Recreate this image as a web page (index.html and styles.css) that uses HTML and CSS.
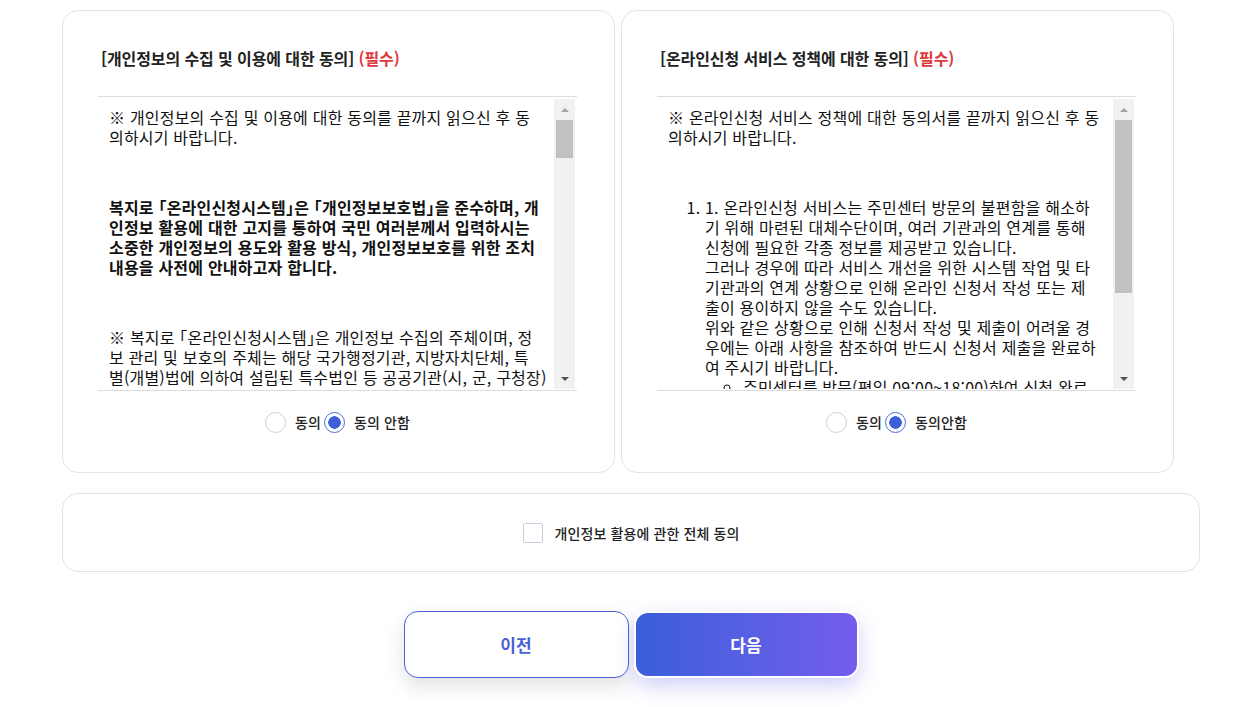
FILE: index.html
```html
<!DOCTYPE html>
<html lang="ko">
<head>
<meta charset="utf-8">
<title>동의</title>
<link rel="stylesheet" href="styles.css">
</head>
<body>
<div class="page">
  <div class="cards">
    <section class="card">
      <h2 class="card-title">[개인정보의 수집 및 이용에 대한 동의] <span class="req">(필수)</span></h2>
      <div class="terms">
        <div class="terms-body">
          <p class="para"><span class="ln">※ 개인정보의 수집 및 이용에 대한 동의를 끝까지 읽으신 후 동</span><span class="ln">의하시기 바랍니다.</span></p>
          <p class="para strong"><span class="ln">복지로 「온라인신청시스템」은 「개인정보보호법」을 준수하며, 개</span><span class="ln">인정보 활용에 대한 고지를 통하여 국민 여러분께서 입력하시는</span><span class="ln">소중한 개인정보의 용도와 활용 방식, 개인정보보호를 위한 조치</span><span class="ln">내용을 사전에 안내하고자 합니다.</span></p>
          <p class="para"><span class="ln">※ 복지로 「온라인신청시스템」은 개인정보 수집의 주체이며, 정</span><span class="ln">보 관리 및 보호의 주체는 해당 국가행정기관, 지방자치단체, 특</span><span class="ln">별(개별)법에 의하여 설립된 특수법인 등 공공기관(시, 군, 구청장)</span></p>
        </div>
        <div class="scrollbar">
          <span class="sb-btn"><span class="tri-up"></span></span>
          <span class="sb-thumb thumb-short"></span>
          <span class="sb-space"></span>
          <span class="sb-btn"><span class="tri-down"></span></span>
        </div>
      </div>
      <div class="choices">
        <label class="choice"><input type="radio" name="a1" class="radio"><span class="choice-text">동의</span></label>
        <label class="choice"><input type="radio" name="a1" class="radio" checked><span class="choice-text">동의 안함</span></label>
      </div>
    </section>

    <section class="card">
      <h2 class="card-title">[온라인신청 서비스 정책에 대한 동의] <span class="req">(필수)</span></h2>
      <div class="terms">
        <div class="terms-body">
          <p class="para"><span class="ln">※ 온라인신청 서비스 정책에 대한 동의서를 끝까지 읽으신 후 동</span><span class="ln">의하시기 바랍니다.</span></p>
          <ol class="num-list">
            <li><span class="ln">1. 온라인신청 서비스는 주민센터 방문의 불편함을 해소하</span><span class="ln">기 위해 마련된 대체수단이며, 여러 기관과의 연계를 통해</span><span class="ln">신청에 필요한 각종 정보를 제공받고 있습니다.</span><span class="ln">그러나 경우에 따라 서비스 개선을 위한 시스템 작업 및 타</span><span class="ln">기관과의 연계 상황으로 인해 온라인 신청서 작성 또는 제</span><span class="ln">출이 용이하지 않을 수도 있습니다.</span><span class="ln">위와 같은 상황으로 인해 신청서 작성 및 제출이 어려울 경</span><span class="ln">우에는 아래 사항을 참조하여 반드시 신청서 제출을 완료하</span><span class="ln">여 주시기 바랍니다.</span>
              <ul class="sub-list">
                <li><span class="ln">주민센터를 방문(평일 09:00~18:00)하여 신청 완료</span></li>
              </ul>
            </li>
          </ol>
        </div>
        <div class="scrollbar">
          <span class="sb-btn"><span class="tri-up"></span></span>
          <span class="sb-thumb thumb-long"></span>
          <span class="sb-space"></span>
          <span class="sb-btn"><span class="tri-down"></span></span>
        </div>
      </div>
      <div class="choices">
        <label class="choice"><input type="radio" name="a2" class="radio"><span class="choice-text">동의</span></label>
        <label class="choice"><input type="radio" name="a2" class="radio" checked><span class="choice-text">동의안함</span></label>
      </div>
    </section>
  </div>

  <section class="all-card">
    <label class="all-label"><input type="checkbox" class="check"><span class="all-text">개인정보 활용에 관한 전체 동의</span></label>
  </section>

  <div class="actions">
    <button class="btn btn-prev" type="button">이전</button>
    <button class="btn btn-next" type="button">다음</button>
  </div>
</div>
</body>
</html>
```

FILE: styles.css
```css
* { box-sizing: border-box; }
html, body { margin: 0; padding: 0; background: #ffffff; }
body {
  font-family: "Noto Sans CJK KR", "Noto Sans", sans-serif;
  color: #111;
}
.page {
  width: 1138px;
  margin-left: 62px;
  padding-top: 10px;
  padding-bottom: 30px;
}
.cards {
  display: grid;
  grid-template-columns: 553px 553px;
  gap: 6px;
}
.card {
  height: 463px;
  border: 1px solid #e3e3e3;
  border-radius: 16px;
  padding: 37px 37px 0 35px;
  display: flex;
  flex-direction: column;
}
.card-title {
  margin: 0 0 0 3px;
  font-size: 16px;
  line-height: 20px;
  font-weight: 700;
  letter-spacing: -0.1px;
  color: #222;
}
.req { color: #e03a3e; }
.terms {
  margin-top: 28px;
  height: 295px;
  border-top: 1px solid #dcdcdc;
  border-bottom: 1px solid #dcdcdc;
  padding: 2px 2px 1px 0;
  display: flex;
}
.terms-body {
  flex: 1;
  overflow: hidden;
  padding: 8px 11px 0 11px;
  font-size: 16px;
  line-height: 20px;
  letter-spacing: 0.2px;
  font-feature-settings: "halt";
  white-space: nowrap;
  color: #111;
}
.ln {
  display: block;
  height: 20px;
  line-height: 20px;
}
.para { margin: 0 0 50px 0; }
.strong { font-weight: 700; }
.num-list {
  margin: 0;
  padding-left: 37px;
}
.sub-list {
  margin: 0;
  padding-left: 38px;
  list-style-type: circle;
}
.scrollbar {
  width: 21px;
  background: #f1f1f1;
  display: flex;
  flex-direction: column;
}
.sb-btn {
  height: 21px;
  display: flex;
  align-items: center;
  justify-content: center;
}
.tri-up {
  width: 0; height: 0;
  border-left: 4px solid transparent;
  border-right: 4px solid transparent;
  border-bottom: 4px solid #a3a3a3;
}
.tri-down {
  width: 0; height: 0;
  border-left: 4px solid transparent;
  border-right: 4px solid transparent;
  border-top: 4px solid #505050;
}
.sb-thumb {
  margin: 0 2px;
  background: #c1c1c1;
}
.thumb-short { height: 38px; }
.thumb-long { height: 173px; }
.sb-space { flex: 1; }
.choices {
  margin-top: 21px;
  display: flex;
  justify-content: center;
  gap: 3px;
}
.choice {
  display: flex;
  align-items: center;
  gap: 9px;
  cursor: pointer;
}
.radio {
  appearance: none;
  -webkit-appearance: none;
  margin: 0;
  width: 21px;
  height: 21px;
  border-radius: 50%;
  border: 1px solid #cfcfcf;
  background: #fff;
}
.radio:checked {
  border: 1.5px solid #4b6be0;
  background: radial-gradient(circle, #3d5fd9 0 6px, #fff 6.5px);
}
.choice-text {
  font-size: 14px;
  line-height: 21px;
  font-weight: 500;
  letter-spacing: 0.1px;
  color: #222;
}
.all-card {
  margin-top: 20px;
  height: 79px;
  border: 1px solid #e3e3e3;
  border-radius: 16px;
  display: flex;
  align-items: center;
  justify-content: center;
}
.all-label {
  display: flex;
  align-items: center;
  gap: 12px;
  cursor: pointer;
}
.check {
  appearance: none;
  -webkit-appearance: none;
  margin: 0;
  width: 20px;
  height: 20px;
  border: 1px solid #c7cddf;
  border-radius: 2px;
  background: #fff;
}
.all-text {
  font-size: 14px;
  font-weight: 500;
  letter-spacing: 0.1px;
  color: #222;
}
.actions {
  margin-top: 39px;
  display: flex;
  justify-content: center;
  gap: 5px;
}
.btn {
  width: 225px;
  height: 67px;
  border-radius: 14px;
  font-family: "Noto Sans CJK KR", "Noto Sans", sans-serif;
  font-size: 17px;
  font-weight: 700;
  cursor: pointer;
}
.btn-prev {
  background: #fff;
  border: 1px solid #4a63d6;
  color: #4a5fd4;
  box-shadow: 0 8px 20px rgba(0, 0, 0, 0.12);
}
.btn-next {
  background: linear-gradient(90deg, #3a5fd8 0%, #5a5fe3 55%, #765cee 100%);
  border: 2px solid #ffffff;
  color: #fff;
  box-shadow: 0 8px 20px rgba(90, 90, 230, 0.28);
}
```
